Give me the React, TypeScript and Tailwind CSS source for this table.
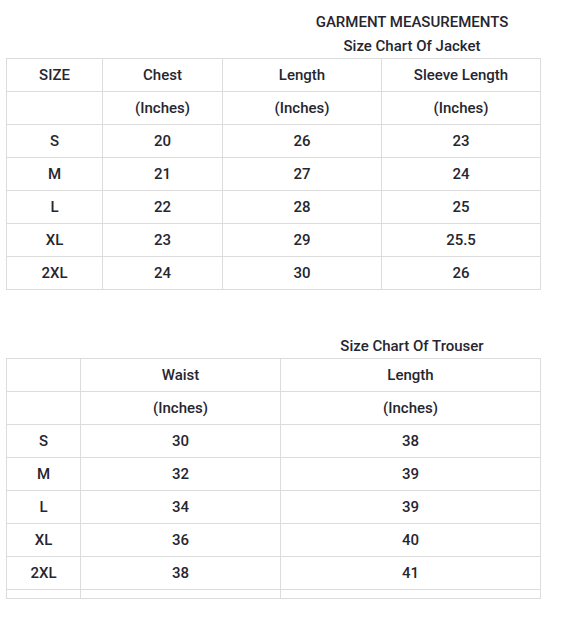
const jacketRows = [
  ["S", "20", "26", "23"],
  ["M", "21", "27", "24"],
  ["L", "22", "28", "25"],
  ["XL", "23", "29", "25.5"],
  ["2XL", "24", "30", "26"],
];

const trouserRows = [
  ["S", "30", "38"],
  ["M", "32", "39"],
  ["L", "34", "39"],
  ["XL", "36", "40"],
  ["2XL", "38", "41"],
];

const cell = "h-[33px] border border-[#dcdcdc] p-0 text-center align-middle";

function Title({ children }: { children: string }) {
  return (
    <div className="ml-[284px] w-[256px] text-center leading-[24px]">
      {children}
    </div>
  );
}

export default function App() {
  return (
    <div
      className="min-h-[627px] w-[578px] bg-white pt-[10px] text-[15px] font-medium text-[#262630]"
      style={{ fontFamily: "Roboto, 'Liberation Sans', sans-serif" }}
    >
      <Title>GARMENT MEASUREMENTS</Title>
      <Title>Size Chart Of Jacket</Title>
      <table className="ml-[6px] w-[534px] table-fixed border-collapse">
        <colgroup>
          <col className="w-[96px]" />
          <col className="w-[120px]" />
          <col className="w-[159px]" />
          <col className="w-[159px]" />
        </colgroup>
        <tbody>
          <tr>
            <td className={cell}>SIZE</td>
            <td className={cell}>Chest</td>
            <td className={cell}>Length</td>
            <td className={cell}>Sleeve Length</td>
          </tr>
          <tr>
            <td className={cell}></td>
            <td className={cell}>(Inches)</td>
            <td className={cell}>(Inches)</td>
            <td className={cell}>(Inches)</td>
          </tr>
          {jacketRows.map((row) => (
            <tr key={row[0]}>
              {row.map((v, i) => (
                <td key={i} className={cell}>
                  {v}
                </td>
              ))}
            </tr>
          ))}
        </tbody>
      </table>

      <div className="mt-[44px]">
        <Title>Size Chart Of Trouser</Title>
      </div>
      <table className="ml-[6px] w-[534px] table-fixed border-collapse">
        <colgroup>
          <col className="w-[74px]" />
          <col className="w-[200px]" />
          <col className="w-[260px]" />
        </colgroup>
        <tbody>
          <tr>
            <td className={cell}></td>
            <td className={cell}>Waist</td>
            <td className={cell}>Length</td>
          </tr>
          <tr>
            <td className={cell}></td>
            <td className={cell}>(Inches)</td>
            <td className={cell}>(Inches)</td>
          </tr>
          {trouserRows.map((row) => (
            <tr key={row[0]}>
              {row.map((v, i) => (
                <td key={i} className={cell}>
                  {v}
                </td>
              ))}
            </tr>
          ))}
          <tr>
            <td className="h-[9px] border border-[#dcdcdc] p-0"></td>
            <td className="h-[9px] border border-[#dcdcdc] p-0"></td>
            <td className="h-[9px] border border-[#dcdcdc] p-0"></td>
          </tr>
        </tbody>
      </table>
    </div>
  );
}
